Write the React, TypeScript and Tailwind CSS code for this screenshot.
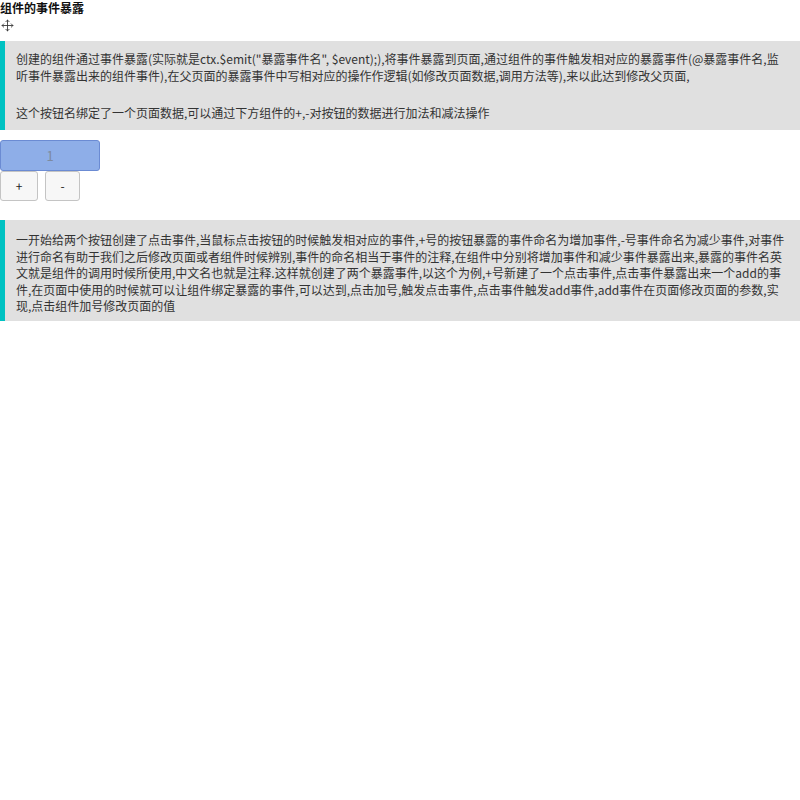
const font = "font-['Microsoft_YaHei','Noto_Sans_CJK_SC',sans-serif]";

const MoveIcon = () => (
  <svg width="13" height="13" viewBox="0 0 24 24" fill="none" stroke="#333" strokeWidth="1.6" strokeLinecap="round" strokeLinejoin="round">
    <path d="M12 2v20M2 12h20" />
    <path d="M9 5l3-3 3 3M9 19l3 3 3-3M5 9l-3 3 3 3M19 9l3 3-3 3" />
  </svg>
);

export default function App() {
  return (
    <div className={`w-[800px] h-[800px] bg-white text-[12px] text-[#333] ${font}`}>
      <p className="font-bold leading-[16px] text-[#111]">组件的事件暴露</p>
      <div className="pl-[1px] h-[18px] flex items-center">
        <MoveIcon />
      </div>

      {/* 说明 */}
      <div className="mt-[7px] bg-[#e0e0e0] border-l-[5px] border-[#00c2c2] pl-[11px] pr-[12px] pt-[9px] pb-[9px] leading-[17px]">
        <p>
          创建的组件通过事件暴露(实际就是ctx.$emit("暴露事件名", $event);),将事件暴露到页面,通过组件的事件触发相对应的暴露事件(@暴露事件名,监听事件暴露出来的组件事件),在父页面的暴露事件中写相对应的操作作逻辑(如修改页面数据,调用方法等),来以此达到修改父页面,
        </p>
        <p className="mt-[20px]">这个按钮名绑定了一个页面数据,可以通过下方组件的+,-对按钮的数据进行加法和减法操作</p>
      </div>

      {/* 按钮 */}
      <div className="mt-[10px] flex flex-col items-start">
        <button className="w-[100px] h-[31px] bg-[#8eaee8] border border-[#6b8bd3] rounded-[3px] text-[#7d8aa0] text-[13px]">
          1
        </button>
        <div className="flex gap-[7px]">
          <button className="w-[38px] h-[30px] bg-[#f7f7f7] border border-[#c4c4c4] rounded-[3px] text-[#222]">+</button>
          <button className="w-[35px] h-[30px] bg-[#f7f7f7] border border-[#c4c4c4] rounded-[3px] text-[#222]">-</button>
        </div>
      </div>

      <div className="mt-[19px] bg-[#e0e0e0] border-l-[5px] border-[#00c2c2] pl-[11px] pr-[14px] pt-[12px] pb-[6px] leading-[16.5px]">
        <p>
          一开始给两个按钮创建了点击事件,当鼠标点击按钮的时候触发相对应的事件,+号的按钮暴露的事件命名为增加事件,-号事件命名为减少事件,对事件进行命名有助于我们之后修改页面或者组件时候辨别,事件的命名相当于事件的注释,在组件中分别将增加事件和减少事件暴露出来,暴露的事件名英文就是组件的调用时候所使用,中文名也就是注释.这样就创建了两个暴露事件,以这个为例,+号新建了一个点击事件,点击事件暴露出来一个add的事件,在页面中使用的时候就可以让组件绑定暴露的事件,可以达到,点击加号,触发点击事件,点击事件触发add事件,add事件在页面修改页面的参数,实现,点击组件加号修改页面的值
        </p>
      </div>
    </div>
  );
}
